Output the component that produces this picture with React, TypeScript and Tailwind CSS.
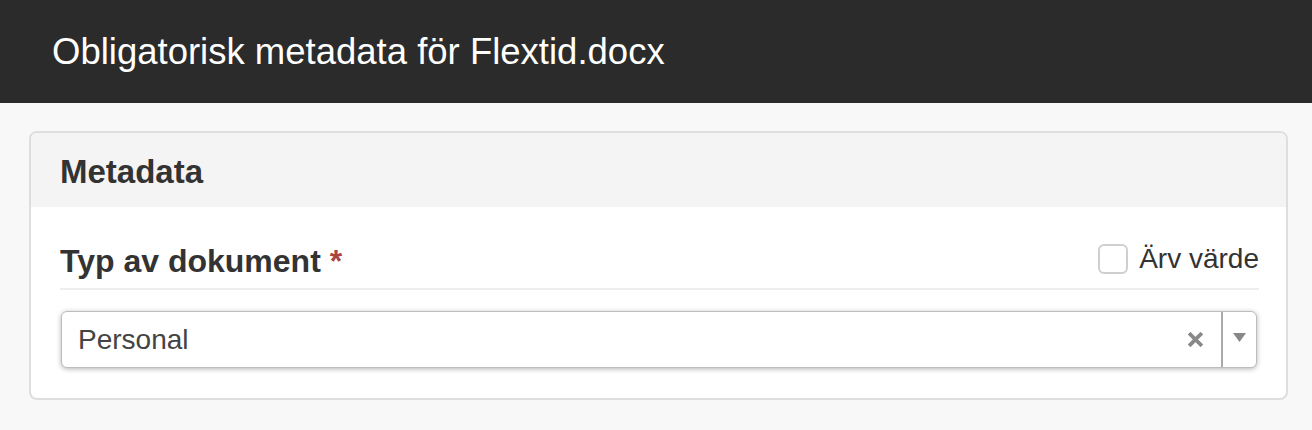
import React from "react";

const font = { fontFamily: '"Liberation Sans", Arial, Helvetica, sans-serif' };

function ClearIcon() {
  return (
    <svg width="15" height="15" viewBox="0 0 15 15" className="shrink-0">
      <path d="M2.5 2.5 L12.5 12.5 M12.5 2.5 L2.5 12.5" stroke="#888" strokeWidth="3.8" strokeLinecap="square" />
    </svg>
  );
}

function SelectBox({ value }: { value: string }) {
  return (
    <div className="ml-[1px] mr-[2px] mt-[21px] flex h-[57px] items-stretch rounded-[6px] border border-[#bdbdbd] bg-white shadow-[0_1px_5px_rgba(0,0,0,0.3)]">
      <div className="flex flex-1 items-center pl-[16px] text-[28px] text-[#444]">{value}</div>
      <div className="flex items-center pr-[18px]">
        <ClearIcon />
      </div>
      <div className="w-[2px] bg-[#aaa]" />
      <div className="flex w-[33px] items-center justify-center pb-[4px]">
        <svg width="13" height="9" viewBox="0 0 13 9">
          <path d="M0 0 H13 L6.5 9 Z" fill="#888" />
        </svg>
      </div>
    </div>
  );
}

export default function App() {
  return (
    <div className="min-h-[430px] bg-[#f8f8f8]" style={font}>
      <div className="flex h-[103px] items-center bg-[#2b2b2b] pl-[52px] pt-[2px]">
        <h1 className="text-[36.5px] font-normal leading-none text-white">Obligatorisk metadata för Flextid.docx</h1>
      </div>

      <div className="ml-[29px] mr-[24px] mt-[28px] overflow-hidden rounded-[8px] border-2 border-[#dedede] bg-white">
        <div className="flex h-[74px] items-center bg-[#f4f4f4] pl-[29px] pr-[27px] pt-[2px]">
          <h2 className="text-[33px] font-bold leading-none text-[#333]">Metadata</h2>
        </div>

        <div className="pl-[29px] pr-[27px] pb-[30px]">
          <div className="flex h-[83px] items-center justify-between border-b-2 border-[#eeeeee] pt-[35px] pb-[12px]">
            <label className="mt-[4px] text-[32px] font-bold leading-[36px] text-[#333]">
              Typ av dokument <span className="text-[#a94442]">*</span>
            </label>
            <label className="flex items-center gap-[11px] text-[28px] leading-none text-[#333]">
              <span className="h-[30px] w-[30px] rounded-[6px] border-2 border-[#cfcfcf] bg-white" />
              Ärv värde
            </label>
          </div>

          <SelectBox value="Personal" />
        </div>
      </div>
    </div>
  );
}
